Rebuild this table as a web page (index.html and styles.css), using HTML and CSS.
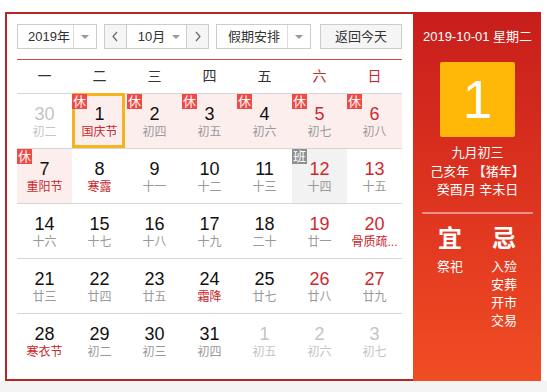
FILE: index.html
```html
<!DOCTYPE html>
<html lang="zh-CN">
<head>
<meta charset="utf-8">
<title>万年历</title>
<link rel="stylesheet" href="styles.css">
</head>
<body>
<div class="page">
  <div class="cal">
    <div class="main">
      <div class="toolbar">
        <div class="sel year">
          <span class="sel-text">2019年</span>
          <span class="sel-arrow"><i class="tri"></i></span>
        </div>
        <div class="mgroup">
          <span class="nav prev"><svg width="8" height="11" viewBox="0 0 8 11"><polyline points="6,1 2,5.5 6,10" fill="none" stroke="#666" stroke-width="1.2"/></svg></span>
          <span class="month">10月<i class="tri"></i></span>
          <span class="nav next"><svg width="8" height="11" viewBox="0 0 8 11"><polyline points="2,1 6,5.5 2,10" fill="none" stroke="#666" stroke-width="1.2"/></svg></span>
        </div>
        <div class="sel holiday">
          <span class="sel-text">假期安排</span>
          <span class="sel-arrow"><i class="tri"></i></span>
        </div>
        <div class="btn today-btn">返回今天</div>
      </div>
      <div class="weekhead">
        <span>一</span><span>二</span><span>三</span><span>四</span><span>五</span><span class="red">六</span><span class="red">日</span>
      </div>
      <div class="grid">
        <div class="cell other"><div class="num">30</div><div class="lu">初二</div></div>
        <div class="cell hol today"><i class="badge">休</i><div class="num">1</div><div class="lu fest">国庆节</div></div>
        <div class="cell hol"><i class="badge">休</i><div class="num">2</div><div class="lu">初四</div></div>
        <div class="cell hol"><i class="badge">休</i><div class="num">3</div><div class="lu">初五</div></div>
        <div class="cell hol"><i class="badge">休</i><div class="num">4</div><div class="lu">初六</div></div>
        <div class="cell hol we"><i class="badge">休</i><div class="num">5</div><div class="lu">初七</div></div>
        <div class="cell hol we"><i class="badge">休</i><div class="num">6</div><div class="lu">初八</div></div>

        <div class="cell hol"><i class="badge">休</i><div class="num">7</div><div class="lu fest">重阳节</div></div>
        <div class="cell"><div class="num">8</div><div class="lu fest">寒露</div></div>
        <div class="cell"><div class="num">9</div><div class="lu">十一</div></div>
        <div class="cell"><div class="num">10</div><div class="lu">十二</div></div>
        <div class="cell"><div class="num">11</div><div class="lu">十三</div></div>
        <div class="cell work we"><i class="badge ban">班</i><div class="num">12</div><div class="lu">十四</div></div>
        <div class="cell we"><div class="num">13</div><div class="lu">十五</div></div>

        <div class="cell"><div class="num">14</div><div class="lu">十六</div></div>
        <div class="cell"><div class="num">15</div><div class="lu">十七</div></div>
        <div class="cell"><div class="num">16</div><div class="lu">十八</div></div>
        <div class="cell"><div class="num">17</div><div class="lu">十九</div></div>
        <div class="cell"><div class="num">18</div><div class="lu">二十</div></div>
        <div class="cell we"><div class="num">19</div><div class="lu">廿一</div></div>
        <div class="cell we"><div class="num">20</div><div class="lu fest">骨质疏...</div></div>

        <div class="cell"><div class="num">21</div><div class="lu">廿三</div></div>
        <div class="cell"><div class="num">22</div><div class="lu">廿四</div></div>
        <div class="cell"><div class="num">23</div><div class="lu">廿五</div></div>
        <div class="cell"><div class="num">24</div><div class="lu fest">霜降</div></div>
        <div class="cell"><div class="num">25</div><div class="lu">廿七</div></div>
        <div class="cell we"><div class="num">26</div><div class="lu">廿八</div></div>
        <div class="cell we"><div class="num">27</div><div class="lu">廿九</div></div>

        <div class="cell last"><div class="num">28</div><div class="lu fest">寒衣节</div></div>
        <div class="cell last"><div class="num">29</div><div class="lu">初二</div></div>
        <div class="cell last"><div class="num">30</div><div class="lu">初三</div></div>
        <div class="cell last"><div class="num">31</div><div class="lu">初四</div></div>
        <div class="cell last other"><div class="num">1</div><div class="lu">初五</div></div>
        <div class="cell last other"><div class="num">2</div><div class="lu">初六</div></div>
        <div class="cell last other"><div class="num">3</div><div class="lu">初七</div></div>
      </div>
    </div>
    <div class="side">
      <div class="side-date">2019-10-01 星期二</div>
      <div class="bigday">1</div>
      <div class="side-lunar">
        <div>九月初三</div>
        <div>己亥年 【猪年】</div>
        <div>癸酉月 辛未日</div>
      </div>
      <div class="side-sep"></div>
      <div class="yiji">
        <div class="yj-col">
          <div class="yj-title">宜</div>
          <div class="yj-item">祭祀</div>
        </div>
        <div class="yj-col">
          <div class="yj-title">忌</div>
          <div class="yj-item">入殓</div>
          <div class="yj-item">安葬</div>
          <div class="yj-item">开市</div>
          <div class="yj-item">交易</div>
        </div>
      </div>
    </div>
  </div>
</div>
</body>
</html>
```

FILE: styles.css
```css
html {
  background: #f4f4f4;
}
body {
  margin: 0;
  font-family: "Liberation Sans", "Noto Sans CJK SC", sans-serif;
  color: #333;
}
.page {
  background: #fff;
  padding: 12px 6px 0 5px;
}
.cal {
  display: flex;
  width: 536px;
  height: 369px;
}
.main {
  width: 408px;
  box-sizing: border-box;
  border: 2px solid #b5282a;
  border-right: 0;
  padding: 10px 11px 10px 10px;
}

/* toolbar */
.toolbar {
  display: flex;
  height: 25px;
  font-size: 13px;
  line-height: 23px;
  color: #333;
}
.sel,
.mgroup,
.btn {
  box-sizing: border-box;
  height: 25px;
  border: 1px solid #ccc;
  display: flex;
}
.sel {
  background: #fff;
}
.sel-text {
  box-sizing: border-box;
  padding-left: 10px;
}
.year {
  width: 80px;
}
.year .sel-text {
  width: 55px;
}
.sel-arrow {
  width: 22px;
  border-left: 1px solid #ddd;
  display: flex;
  align-items: center;
  justify-content: center;
}
.tri {
  display: inline-block;
  width: 0;
  height: 0;
  border-left: 4px solid transparent;
  border-right: 4px solid transparent;
  border-top: 4px solid #999;
}
.mgroup {
  margin-left: 7px;
  width: 105px;
  background: #fff;
}
.nav {
  width: 21px;
  background: #f5f5f5;
  display: flex;
  align-items: center;
  justify-content: center;
}
.prev {
  border-right: 1px solid #ccc;
}
.next {
  border-left: 1px solid #ccc;
}
.month {
  width: 60px;
  box-sizing: border-box;
  padding-left: 11px;
  display: flex;
  align-items: center;
}
.month .tri {
  margin-left: 7px;
}
.holiday {
  margin-left: 7px;
  width: 95px;
}
.holiday .sel-text {
  width: 71px;
  padding-left: 11px;
}
.today-btn {
  margin-left: 9px;
  width: 82px;
  background: #f5f5f5;
  justify-content: center;
}

/* week header */
.weekhead {
  margin-top: 10px;
  border-top: 1px solid #d24b4b;
  border-bottom: 1px solid #d6d6d6;
  display: grid;
  grid-template-columns: repeat(7, 55px);
  height: 33px;
  line-height: 33px;
  font-size: 14px;
  text-align: center;
  color: #333;
}
.weekhead .red {
  color: #c9282d;
}

/* grid */
.grid {
  display: grid;
  grid-template-columns: repeat(7, 55px);
  grid-auto-rows: 55px;
}
.cell {
  position: relative;
  box-sizing: border-box;
  border-bottom: 1px solid #d6d6d6;
  padding-top: 9px;
  text-align: center;
}
.cell.last {
  border-bottom: 0;
}
.num {
  font-size: 18px;
  line-height: 22px;
  color: #111;
}
.lu {
  font-size: 12px;
  line-height: 14px;
  color: #999;
  white-space: nowrap;
  overflow: hidden;
}
.lu.fest {
  color: #c9282d;
}
.we .num {
  color: #d0282e;
}
.other .num,
.other .lu {
  color: #c4c4c4;
}
.hol {
  background: #fdeeee;
}
.work {
  background: #f2f2f2;
}
.badge {
  position: absolute;
  left: 0;
  top: 0;
  z-index: 2;
  width: 15px;
  height: 15px;
  background: #ef4a45;
  color: #fff;
  font-style: normal;
  font-size: 13px;
  line-height: 15px;
  text-align: center;
}
.badge.ban {
  background: #8f8f8f;
}
.today::after {
  content: "";
  position: absolute;
  left: 0;
  top: -1px;
  width: 53px;
  height: 55px;
  box-sizing: border-box;
  border: 3px solid #f5b41c;
  z-index: 1;
}

/* side panel */
.side {
  width: 128px;
  box-sizing: border-box;
  background: linear-gradient(#c71e1c, #df3620 55%, #f04d23);
  color: #fff;
  text-align: center;
  padding: 16px 8px 0 9px;
  font-family: "Liberation Sans", "Noto Sans CJK SC", sans-serif;
}
.side-date {
  font-size: 13px;
  line-height: 18px;
}
.bigday {
  width: 75px;
  height: 75px;
  margin: 16px auto 0;
  background: #ffb808;
  border-radius: 2px;
  font-size: 53px;
  line-height: 75px;
}
.side-lunar {
  margin-top: 7px;
  font-size: 13px;
  line-height: 18.5px;
}
.side-sep {
  margin-top: 12px;
  height: 2px;
  background: rgba(255, 255, 255, 0.45);
}
.yiji {
  display: flex;
  justify-content: center;
  gap: 4px;
  margin-top: 11px;
  margin-left: -1px;
}
.yj-col {
  width: 50px;
}
.yj-title {
  font-size: 24px;
  line-height: 28px;
  font-weight: bold;
  margin-bottom: 5px;
}
.yj-item {
  font-size: 13px;
  line-height: 18px;
}
```
